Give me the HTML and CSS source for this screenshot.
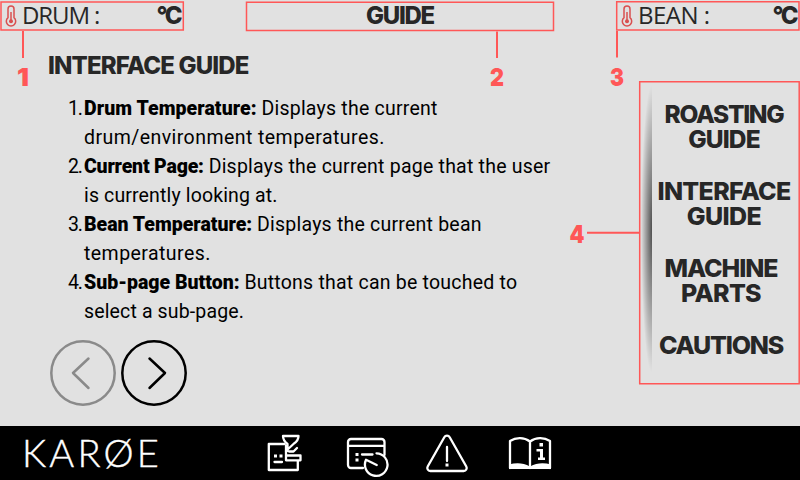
FILE: index.html
```html
<!DOCTYPE html>
<html lang="en">
<head>
<meta charset="utf-8">
<title>Guide</title>
<link rel="stylesheet" href="styles.css">
</head>
<body>
<div class="screen">
  <header class="topbar">
    <div class="reading">
      <svg class="thermo" viewBox="0 0 12 22" width="12" height="22"><path d="M3 12.7V4a3 3 0 0 1 6 0v8.700a4.700 4.700 0 1 1-6 0z"/><path d="M6 7v9"/><circle cx="6" cy="16.200" r="2"/></svg>
      <span class="label drum">DRUM :</span><span class="unit">°C</span>
    </div>
    <h1 class="page-name">GUIDE</h1>
    <div class="reading bean-reading">
      <svg class="thermo" viewBox="0 0 12 22" width="12" height="22"><path d="M3 12.7V4a3 3 0 0 1 6 0v8.700a4.700 4.700 0 1 1-6 0z"/><path d="M6 7v9"/><circle cx="6" cy="16.200" r="2"/></svg>
      <span class="label bean">BEAN :</span><span class="unit">°C</span>
    </div>
  </header>
  <div class="body">
    <main class="content">
      <h2>INTERFACE GUIDE</h2>
      <ol class="guide">
        <li><span class="num">1.</span><p><b class="a">Drum Temperature:</b> <span class="m">Displays the current</span><br><span class="w">drum/environment temperatures.</span></p></li>
        <li><span class="num">2.</span><p><b class="c">Current Page:</b> <span class="m">Displays the current page that the user</span><br><span class="n">is currently looking at.</span></p></li>
        <li><span class="num">3.</span><p><b>Bean Temperature:</b> <span class="m">Displays the current bean</span><br><span class="w">temperatures.</span></p></li>
        <li><span class="num">4.</span><p><b>Sub-page Button:</b> <span class="m">Buttons that can be touched to</span><br><span class="n">select a sub-page.</span></p></li>
      </ol>
      <div class="pager">
        <svg class="prev" viewBox="0 0 66 66" width="66" height="66"><circle cx="33" cy="33" r="31.700"/><path d="M38.500 18.500 23 33l15.500 15"/></svg>
        <svg class="next" viewBox="0 0 66 66" width="66" height="66"><circle cx="33" cy="33" r="31.700"/><path d="M28.500 18.500 44 33 28.500 48"/></svg>
      </div>
    </main>
    <nav class="menu">
      <div class="shade"></div>
      <ul>
        <li class="small"><span class="roasting">ROASTING</span><span class="g1">GUIDE</span></li>
        <li><span class="interface">INTERFACE</span><span class="g2">GUIDE</span></li>
        <li class="left"><span class="machine">MACHINE</span><span class="parts">PARTS</span></li>
        <li class="left"><span class="cautions">CAUTIONS</span></li>
      </ul>
    </nav>
  </div>
  <footer class="dock">
    <span class="brand">KARØE</span>
    <svg class="machine-icon" viewBox="0 0 36 40" width="36" height="40"><g class="ln"><path d="M18.500 10H2.800v26h29v-9.500M20 11.500v14.800h14.500V21.500H21"/><path d="M17 2h15.500c0 3.500-1.500 5.500-4.500 7.500L20 17M17 2c0 4 2 6 4.500 8v7M23 17.500h4.500l3.500-3.500"/><path d="M8.500 28h7.500"/></g><path class="fill" d="M8 20.500h3v3H8zM13.500 20.500h3v3h-3z"/></svg>
    <svg class="history-icon" viewBox="0 0 44 42" width="44" height="42"><g class="ln"><path d="M18 32H6a3 3 0 0 1-3-3V6a3 3 0 0 1 3-3h30.500a3 3 0 0 1 3 3v13M3 9.800h36.500M17 18.500h10.500"/><path d="M31.500 17.300a11.300 11.300 0 1 1-10.500 6.500L31.700 29"/></g><path class="fill" d="M10.500 17h3v3h-3zM10.500 22.500h3v3h-3z"/></svg>
    <svg class="alert-icon" viewBox="0 0 44 40" width="44" height="40"><path class="ln" d="M19.300 3.300 2.700 32.500a3 3 0 0 0 2.600 4.500h33.400a3 3 0 0 0 2.600-4.500L24.700 3.300a3.100 3.100 0 0 0-5.400 0zM22 13v14"/><path class="fill" d="M20.500 29.500h3v3h-3z"/></svg>
    <svg class="book-icon" viewBox="0 0 44 34" width="44" height="34"><path class="ln" d="M2 32V5c6-4 14-4 20 .5C28 1 36 1 42 5v27M22 5.500V32"/><path class="fill" d="M1 33v-4.500c7-2 14-2 21 2 7-4 14-4 21-2V33z"/><path class="fill" d="M31.500 7h3.500v3.500h-3.500zM28.500 13h6.500v8.500h2V24h-7v-2.500h2v-6h-3.500z"/></svg>
  </footer>
  <svg class="callouts" viewBox="0 0 800 480" width="800" height="480">
    <path d="M1 2H183.300V30H1zM246.500 2.300H553.500V30.500H246.500zM616.700 1.700H799V30H616.700zM639.700 81.700H799.200V383.700H639.700z"/>
    <path class="lead" d="M23 31V58M497 31.500V58M617 31V57.500M587 232.800H639"/>
    <text x="17" y="86" textLength="12" lengthAdjust="spacingAndGlyphs">1</text>
    <text x="490" y="86" textLength="14" lengthAdjust="spacingAndGlyphs">2</text>
    <text x="610" y="86" textLength="14" lengthAdjust="spacingAndGlyphs">3</text>
    <text x="569.500" y="243" textLength="15" lengthAdjust="spacingAndGlyphs">4</text>
  </svg>
</div>
</body>
</html>
```

FILE: styles.css
```css
* { box-sizing: border-box; margin: 0; padding: 0; }
body { width: 800px; height: 480px; overflow: hidden; background: #e1e1e1; }
.screen {
  position: relative;
  display: flex;
  flex-direction: column;
  width: 800px;
  height: 480px;
  color: #272727;
  font-family: Inter, sans-serif;
}
.topbar {
  display: grid;
  grid-template-columns: 184px 1fr 184px;
  height: 31px;
  line-height: 31px;
  font-size: 24px;
}
.reading { display: flex; padding: 0 4px 0 5px; }
.thermo { margin: 5px 5px 0 0; fill: none; stroke: #d94f4f; stroke-width: 1.5; flex: none; }
.thermo circle { fill: #d94f4f; stroke: none; }
.label { flex: 1; font-family: "Open Sans", sans-serif; line-height: 30px; white-space: nowrap; }
.drum { letter-spacing: -1.1px; }
.bean { letter-spacing: -.5px; }
.unit { font-weight: 800; letter-spacing: -2.5px; }
.page-name { font-size: 24px; font-weight: 800; text-align: center; letter-spacing: -1.3px; }

.body { display: flex; height: 395px; }
.content { width: 640px; padding: 17.500px 0 0 47px; }
h2 { padding-left: 1px; font-size: 24px; font-weight: 800; line-height: 33px; letter-spacing: -.85px; }
.guide {
  margin-top: 12px;
  list-style: none;
  color: #000;
  font: 19.500px/29px Roboto, sans-serif;
}
.guide li { display: flex; white-space: nowrap; }
.num { width: 37px; padding-right: 2px; text-align: right; letter-spacing: -1px; }
.guide b { font-weight: 900; }
.a { letter-spacing: .07px; }
.c { letter-spacing: -.19px; }
.m { letter-spacing: .22px; }
.n { letter-spacing: .14px; }
.w { letter-spacing: .44px; }
.pager { display: flex; gap: 5px; margin: 14.500px 0 0 3px; }
.pager svg { fill: none; stroke-width: 2.5; stroke-linecap: round; stroke-linejoin: round; }
.prev { stroke: #8a8a8a; }
.next { stroke: #000; }

.menu { display: flex; width: 160px; padding-top: 53px; }
.shade {
  width: 12px;
  height: 290px;
  background: radial-gradient(ellipse 11px 144px at 100% 50%, rgba(0, 0, 0, .65), transparent);
}
.menu ul {
  flex: 1;
  display: flex;
  flex-direction: column;
  gap: 28px;
  padding: 18px 4px 0 0;
  list-style: none;
  text-align: center;
  font-size: 25px;
  font-weight: 800;
  line-height: 24.500px;
  white-space: nowrap;
}
.menu span { display: block; }
.menu .small { font-size: 24.500px; }
.menu .left { margin-right: 6px; }
.roasting { letter-spacing: -1.3px; }
.g1 { letter-spacing: -.9px; }
.g2 { letter-spacing: -.6px; }
.interface { letter-spacing: -.7px; }
.machine { letter-spacing: -1.1px; }
.parts { letter-spacing: -.7px; }
.cautions { letter-spacing: -1.2px; }

.dock { display: flex; height: 54px; padding-top: 8px; background: #000; color: #fff; }
.dock svg { flex: none; }
.brand {
  width: 266px;
  margin-top: -8px;
  padding-left: 22px;
  font: 300 38px/52px Lato, sans-serif;
  letter-spacing: 3.2px;
  -webkit-text-stroke: .4px #fff;
}
.history-icon { margin: 2px 0 0 43px; }
.alert-icon { margin-left: 36px; }
.book-icon { margin: 2px 0 0 38.500px; }
.ln { fill: none; stroke: #fff; stroke-width: 2.3; stroke-linecap: round; stroke-linejoin: round; }
.fill { fill: #fff; }

.callouts { position: absolute; inset: 0; pointer-events: none; }
.callouts path { fill: none; stroke: #ff5757; stroke-width: 1.5; }
.callouts .lead { stroke-width: 2; }
.callouts text { fill: #ff5757; font: 900 25px Inter, sans-serif; }
```
